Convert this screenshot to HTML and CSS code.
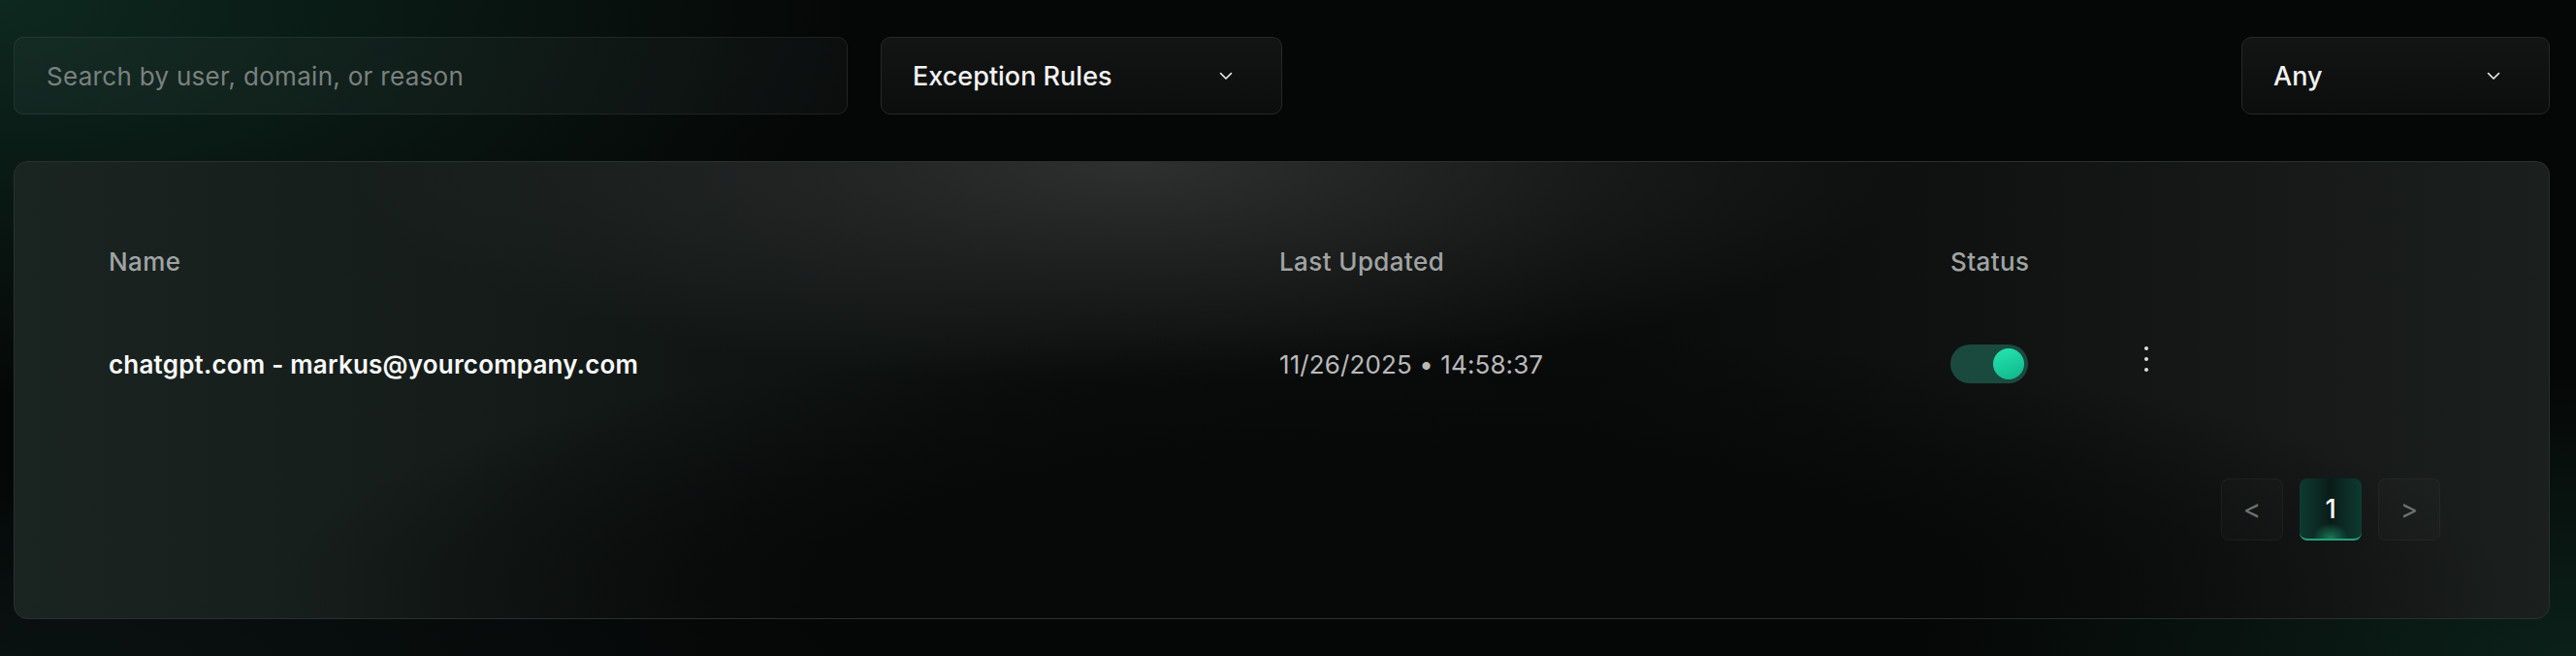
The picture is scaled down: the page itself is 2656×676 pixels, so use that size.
FILE: index.html
```html
<!DOCTYPE html>
<html lang="en">
<head>
<meta charset="utf-8">
<title>Exception Rules</title>
<link rel="stylesheet" href="styles.css">
</head>
<body>
<div class="page">
  <div class="toolbar">
    <div class="search"><span class="placeholder">Search by user, domain, or reason</span></div>
    <div class="select select-type">
      <span>Exception Rules</span>
      <svg class="chev" width="14" height="9" viewBox="0 0 14 9"><polyline points="1.5,1.5 7,7 12.5,1.5" fill="none" stroke="#f2f2f2" stroke-width="1.6" stroke-linecap="round" stroke-linejoin="round"/></svg>
    </div>
    <div class="select select-any">
      <span>Any</span>
      <svg class="chev" width="14" height="9" viewBox="0 0 14 9"><polyline points="1.5,1.5 7,7 12.5,1.5" fill="none" stroke="#f2f2f2" stroke-width="1.6" stroke-linecap="round" stroke-linejoin="round"/></svg>
    </div>
  </div>

  <div class="card">
    <div class="table">
      <div class="thead">
        <div class="th">Name</div>
        <div class="th">Last Updated</div>
        <div class="th">Status</div>
        <div class="th"></div>
      </div>
      <div class="tr">
        <div class="td name">chatgpt.com - markus@yourcompany.com</div>
        <div class="td date">11/26/2025 • 14:58:37</div>
        <div class="td"><span class="toggle"><span class="knob"></span></span></div>
        <div class="td"><span class="dots"><i></i><i></i><i></i></span></div>
      </div>
    </div>
    <div class="pager">
      <span class="pbtn">&lt;</span>
      <span class="pbtn active">1</span>
      <span class="pbtn">&gt;</span>
    </div>
  </div>
</div>
</body>
</html>
```

FILE: styles.css
```css
html, body {
  margin: 0;
  padding: 0;
}
body {
  width: 2656px;
  height: 676px;
  overflow: hidden;
  font-family: "Inter", "Liberation Sans", sans-serif;
  color: #f0f0f0;
  background:
    radial-gradient(ellipse 900px 420px at 0px 0px, rgba(16, 52, 40, 0.75), rgba(16, 52, 40, 0) 100%),
    radial-gradient(ellipse 700px 300px at 2656px 676px, rgba(14, 44, 34, 0.7), rgba(14, 44, 34, 0) 100%),
    radial-gradient(ellipse 900px 200px at 0px 676px, rgba(14, 30, 28, 0.5), rgba(14, 30, 28, 0) 100%),
    #050606;
}
.page {
  padding: 38px 27px 0 14px;
}
.toolbar {
  display: flex;
  align-items: center;
  height: 80px;
}
.search {
  box-sizing: border-box;
  width: 860px;
  height: 80px;
  display: flex;
  align-items: center;
  padding-left: 33px;
  border: 1px solid rgba(255, 255, 255, 0.07);
  border-radius: 10px;
  background: linear-gradient(90deg, rgba(40, 60, 55, 0.28), rgba(40, 44, 44, 0.22));
}
.placeholder {
  font-size: 26px;
  color: #7b817f;
  letter-spacing: 0.3px;
}
.select {
  box-sizing: border-box;
  height: 80px;
  display: flex;
  align-items: center;
  justify-content: space-between;
  padding: 0 50px 0 32px;
  border: 1px solid #262727;
  border-radius: 10px;
  background: linear-gradient(180deg, #131414, #0c0d0d);
  font-size: 27px;
  font-weight: 500;
  color: #f2f2f2;
}
.select-type {
  width: 414px;
  margin-left: 34px;
}
.select-any {
  width: 318px;
  margin-left: auto;
}
.chev {
  display: block;
}
.card {
  box-sizing: border-box;
  margin-top: 48px;
  height: 472px;
  border: 1px solid #2a302e;
  border-radius: 14px;
  padding: 71px 112px 0 97px;
  background:
    radial-gradient(ellipse 1150px 270px at 1420px 440px, #070808 50%, rgba(7, 8, 8, 0) 100%),
    radial-gradient(ellipse 800px 230px at 1150px 0px, rgba(48, 49, 49, 0.95), rgba(48, 49, 49, 0) 100%),
    linear-gradient(90deg, #1a2421 0%, #151c1a 18%, #0b0d0d 42%, #090a0a 62%, #121514 82%, #1b1f1e 100%);
}
.thead, .tr {
  display: grid;
  grid-template-columns: 1207px 692px 200px 1fr;
  align-items: center;
}
.thead {
  height: 62px;
}
.th {
  font-size: 26px;
  font-weight: 500;
  color: #a0a4a3;
  letter-spacing: 0.4px;
}
.tr {
  height: 150px;
}
.td.name {
  font-size: 26px;
  font-weight: 600;
  color: #fafafa;
  letter-spacing: 0.2px;
}
.td.date {
  font-size: 26px;
  color: #b9b9b9;
  letter-spacing: 0.1px;
}
.toggle {
  display: flex;
  align-items: center;
  justify-content: flex-end;
  box-sizing: border-box;
  width: 80px;
  height: 40px;
  padding-right: 4px;
  border-radius: 20px;
  background: #1a4a3e;
}
.knob {
  width: 32px;
  height: 32px;
  border-radius: 50%;
  background: linear-gradient(160deg, #26e6b0, #0fb48a);
}
.dots {
  display: flex;
  flex-direction: column;
  gap: 7px;
  width: 4px;
  margin-top: -10px;
}
.dots i {
  display: block;
  width: 4px;
  height: 4px;
  border-radius: 50%;
  background: #dedede;
}
.pager {
  display: flex;
  justify-content: flex-end;
  gap: 17px;
  margin-top: 43px;
}
.pbtn {
  box-sizing: border-box;
  width: 64px;
  height: 64px;
  display: flex;
  align-items: center;
  justify-content: center;
  border: 1px solid rgba(255, 255, 255, 0.04);
  border-radius: 8px;
  background: rgba(255, 255, 255, 0.015);
  font-size: 28px;
  color: #6e7170;
}
.pbtn.active {
  border: none;
  border-bottom: 2px solid #23a27b;
  color: #ffffff;
  font-size: 27px;
  font-weight: 500;
  background:
    radial-gradient(ellipse 18px 16px at 50% 100%, rgba(40, 200, 140, 0.55), rgba(40, 200, 140, 0) 100%),
    linear-gradient(90deg, #0d3a2f 0%, #0c2c25 25%, #0a1b17 50%, #0c2c25 75%, #0d3a2f 100%);
}
```
